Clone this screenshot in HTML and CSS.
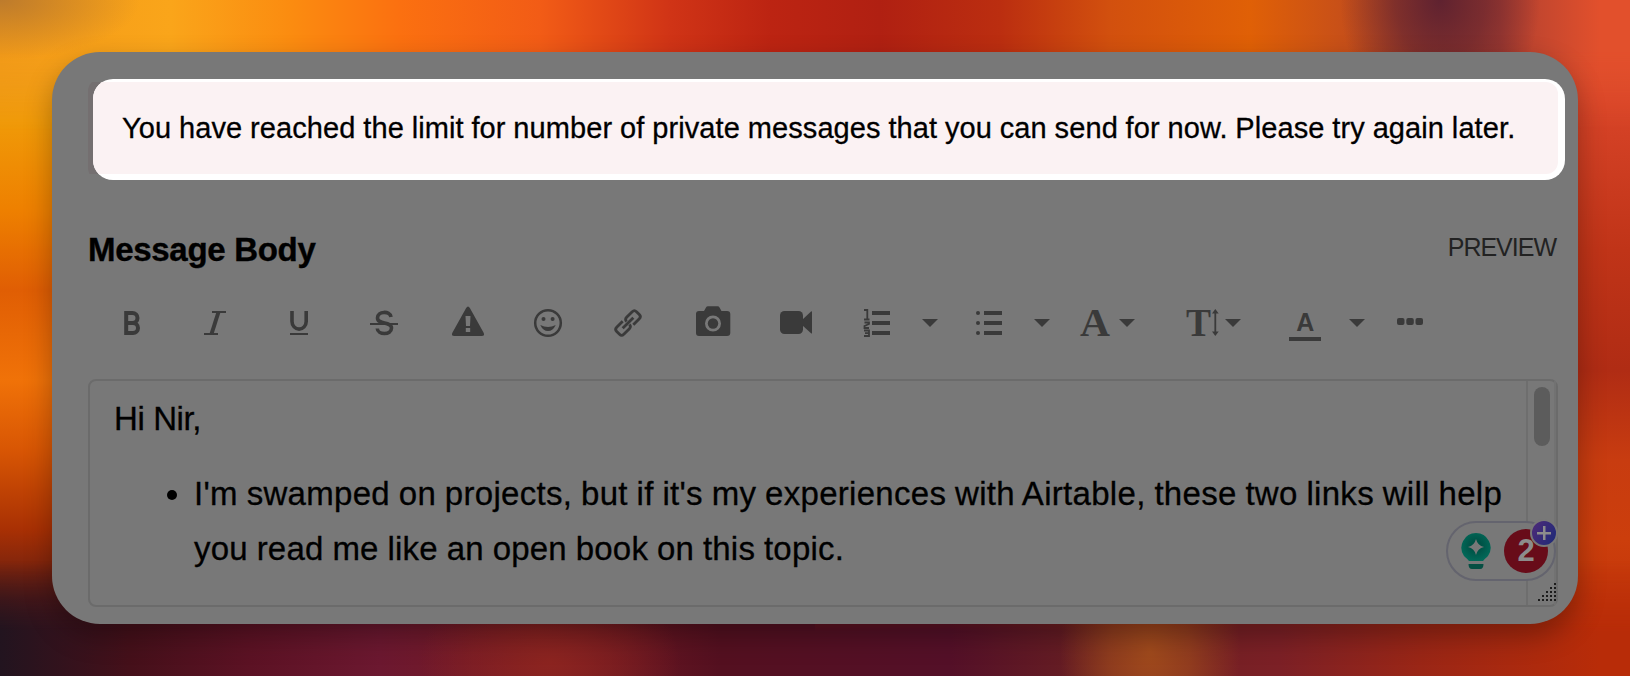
FILE: index.html
```
<!DOCTYPE html>
<html lang="en">
<head>
    <meta charset="UTF-8">
    <meta name="viewport" content="width=device-width, initial-scale=1.0">
    <title>Private Message</title>
    <link rel="stylesheet" href="styles.css">
</head>
<body>

<div class="container">
    <div class="alert-shade">
        <div class="alert">
            <p class="alert-text">You have reached the limit for number of private messages that you can send for now. Please try again later.</p>
        </div>
    </div>

    <div class="editor-header">
        <h2>Message Body</h2>
        <span class="preview">PREVIEW</span>
    </div>

    <!-- Formatting toolbar -->
    <svg class="toolbar" width="1470" height="60" viewBox="88 292 1470 60">
        <!-- bold -->
        <path class="stroke w4" d="M126.3 313H132.500A5 5 0 0 1 132.500 323H126.300M132 323H133A5 5 0 0 1 133 333H126.300M126.200 311V335"/>
        <!-- italic -->
        <path class="stroke w2" d="M212 312H226M204 334H218"/>
        <path class="stroke w4" d="M218.500 312L211.500 334"/>
        <!-- underline -->
        <path class="stroke w35" d="M292 311V321.500A7 7.500 0 0 0 306.200 321.500V311"/>
        <path class="stroke w2" d="M290 334H308"/>
        <!-- strikethrough -->
        <path class="stroke w35" d="M391 317C390 310.500 377.500 311 377.500 318C377.500 325 391.500 321 391.500 328C391.500 335.500 377.500 335 377.300 328.500"/>
        <path class="stroke w2" d="M370 324H398"/>
        <!-- warning -->
        <path class="fill" fill-rule="evenodd" d="M466 308.200Q468 304.600 470 308.200L483.500 332.500Q485.300 336 481.500 336H454.500Q450.700 336 452.500 332.500ZM465.500 316L466 326H470L470.500 316ZM465.800 328V332H470.200V328Z"/>
        <!-- emoji -->
        <circle class="stroke w25" cx="548" cy="323" r="12.800"/>
        <circle class="fill" cx="543.500" cy="319" r="2"/>
        <circle class="fill" cx="552.600" cy="319" r="2"/>
        <path class="fill" d="M540.300 325Q548 329 555.700 325Q553 331 548 331Q543 331 540.300 325Z"/>
        <!-- link -->
        <g class="stroke w3" transform="translate(628 323) rotate(-45)">
            <path d="M-2.500 -5H-11Q-14 -5 -14 -2V2Q-14 5 -11 5H-3Q0 5 0 2"/>
            <path d="M2.500 5H11Q14 5 14 2V-2Q14 -5 11 -5H3Q0 -5 0 -2"/>
            <path d="M-7.500 0H7.500"/>
        </g>
        <!-- camera -->
        <path class="fill" fill-rule="evenodd" d="M699 311H704L706 307.500Q706.500 306.300 708 306.300H717.500Q719 306.300 719.500 307.500L721.500 311H727Q730.300 311 730.300 314V333Q730.300 336 727 336H699Q696 336 696 333V314Q696 311 699 311ZM713 315.500A8 8 0 1 0 713 331.500A8 8 0 1 0 713 315.500Z"/>
        <circle class="fill" cx="713" cy="323.500" r="5.200"/>
        <!-- video -->
        <rect class="fill" x="780" y="311" width="23" height="23" rx="4.500"/>
        <path class="fill" d="M802 320L811 311.500Q812 311 812 312V333Q812 334 811 333.300L802 325Z"/>
        <!-- ordered list -->
        <path class="stroke w4" d="M872 313H890M872 323H890M872 333H890"/>
        <path class="stroke w15" d="M864 310H867.300V319M864 319.500H869.500M864.500 322.500H869V324L864.500 326V328H869M864 330.500H869V336H864M865 333.200H869"/>
        <path class="fill" d="M922 319H938L930 327Z"/>
        <!-- bullet list -->
        <path class="stroke w4" d="M984 313H1002M984 323H1002M984 333H1002"/>
        <circle class="fill" cx="978" cy="313" r="2"/>
        <circle class="fill" cx="978" cy="323" r="2"/>
        <circle class="fill" cx="978" cy="333" r="2"/>
        <path class="fill" d="M1034 319H1050L1042 327Z"/>
        <!-- font family -->
        <text class="serif-icon" x="1080" y="336" font-size="40" textLength="30" lengthAdjust="spacingAndGlyphs">A</text>
        <path class="fill" d="M1119 319H1135L1127 327Z"/>
        <!-- font size -->
        <text class="serif-icon" x="1186" y="336" font-size="41" textLength="25" lengthAdjust="spacingAndGlyphs">T</text>
        <path class="stroke w15" d="M1215.300 311V334"/>
        <path class="fill" d="M1212 313.500L1215.300 309L1218.700 313.500ZM1212 331.500L1215.300 336L1218.700 331.500Z"/>
        <path class="fill" d="M1225 319H1241L1233 327Z"/>
        <!-- text color -->
        <text class="sans-icon" x="1296.300" y="331" font-size="25">A</text>
        <rect class="fill" x="1289" y="337" width="32" height="4"/>
        <path class="fill" d="M1349 319H1365L1357 327Z"/>
        <!-- more -->
        <rect class="fill" x="1397" y="318" width="7.500" height="7" rx="2"/>
        <rect class="fill" x="1406.300" y="318" width="7.500" height="7" rx="2"/>
        <rect class="fill" x="1415.500" y="318" width="7.500" height="7" rx="2"/>
    </svg>

    <div class="editor">
        <div class="editor-content">
            <p class="greeting">Hi Nir,</p>
            <ul>
                <li>
                    <span class="line1">I'm swamped on projects, but if it's my experiences with Airtable, these two links will help</span><br>
                    <span class="line2">you read me like an open book on this topic.</span>
                </li>
            </ul>
        </div>
        <div class="scrollbar">
            <div class="thumb"></div>
        </div>

        <!-- Writing assistant badge -->
        <div class="assistant">
            <svg class="bulb" width="32" height="40" viewBox="0 0 32 40">
                <defs>
                    <radialGradient id="bulbFill" cx="0.5" cy="0.45" r="0.6">
                        <stop offset="0.3" stop-color="#005246"/>
                        <stop offset="1" stop-color="#026c5b"/>
                    </radialGradient>
                </defs>
                <path fill="url(#bulbFill)" fill-rule="evenodd" d="M16 2A14.700 14.700 0 0 0 4 25Q8 28.500 9 30H23Q24 28.500 28 25A14.700 14.700 0 0 0 16 2ZM16 8Q17.500 14.500 24 16Q17.500 17.500 16 24Q14.500 17.500 8 16Q14.500 14.500 16 8Z"/>
                <path fill="#064f43" d="M8.500 33H23.500Q23.500 38 20 38H12Q8.500 38 8.500 33Z"/>
            </svg>
            <span class="count">2</span>
            <span class="plus"></span>
        </div>

        <!-- Resize grip -->
        <svg class="grip" width="18" height="18" viewBox="0 0 18 18">
            <path d="M16 0h2v2h-2zM12 4h2v2h-2zM16 4h2v2h-2zM8 8h2v2h-2zM12 8h2v2h-2zM16 8h2v2h-2zM4 12h2v2h-2zM8 12h2v2h-2zM12 12h2v2h-2zM16 12h2v2h-2zM0 16h2v2h-2zM4 16h2v2h-2zM8 16h2v2h-2zM12 16h2v2h-2zM16 16h2v2h-2z"/>
        </svg>
    </div>
</div>

</body>
</html>
```
FILE: styles.css
```
* {
    margin: 0;
    padding: 0;
    box-sizing: border-box;
    font-family: "Liberation Sans", Arial, sans-serif;
}
html {
    height: 676px;
    overflow: hidden;
}
body {
    position: relative;
    z-index: 0;
    height: 676px;
    padding: 52px;
    overflow: hidden;
    background:
        linear-gradient(to bottom, #e89a28 0, #f09a08 120px, #ee8000 210px, #e05e04 290px, #f07208 380px, #d85604 450px, #a83004 530px, #5c1a14 600px, #241420 676px) 0 0 / 50% 100% no-repeat,
        linear-gradient(to bottom, #e2502c 0, #d84428 100px, #c03418 250px, #b02c14 370px, #c83c10 460px, #cc3e0c 540px, #b82c08 676px) 100% 0 / 50% 100% no-repeat;
}
/* wallpaper bands above and below the panel, faded into the side colours */
body::before,
body::after {
    content: "";
    position: absolute;
    z-index: -1;
    left: 0;
    width: 100%;
    height: 130px;
}
body::before {
    top: 0;
    background:
        radial-gradient(ellipse 140px 60px at 0 0, #bd7b2c, transparent),
        radial-gradient(ellipse 100px 130px at 1440px 0, #5f2230, #5f2230aa 45%, transparent),
        linear-gradient(to right, #f29a18 0, #faa51a 170px, #fb8c10 290px, #fb7010 400px, #f25c16 540px, #d03416 670px, #bc2412 770px, #b02012 880px, #bb2e10 1000px, #d2500e 1110px, #e06006 1250px, #c85018 1340px, #b04030 1500px, #e2502c 1600px);
    -webkit-mask-image: linear-gradient(to bottom, #000 30px, transparent);
    mask-image: linear-gradient(to bottom, #000 52px, transparent);
}
body::after {
    bottom: 0;
    background:
        radial-gradient(ellipse 130px 90px at 550px 115px, #8c2420, transparent),
        radial-gradient(ellipse 90px 130px at 1150px 105px, #a04a1c, #a04a1caa 45%, transparent),
        linear-gradient(to right, #22141f 0, #45101a 130px, #5c1224 250px, #6c1830 380px, #7a1c22 540px, #541020 720px, #541028 950px, #6a2022 1100px, #7c2026 1280px, #9a2616 1420px, #b82c08 1600px);
    -webkit-mask-image: linear-gradient(to top, #000 45px, transparent 115px);
    mask-image: linear-gradient(to top, #000 45px, transparent 115px);
}
.container {
    width: 1526px;
    height: 572px;
    padding: 27px 20px 17px 36px;
    background: #787878;
    border-radius: 48px;
    box-shadow: 0 12px 28px rgba(0, 0, 0, 0.3);
}
.alert-shade {
    display: flex;
    width: 1477px;
    height: 101px;
    padding-left: 5px;
    background: linear-gradient(#746f70, #746f70) 0 3px / 20px 92px no-repeat;
    border-radius: 12px;
}
.alert {
    width: 1472px;
    height: 101px;
    padding: 3px 7px 6px 0;
    background: #fff;
    border-radius: 20px;
    overflow: hidden;
}
.alert-text {
    height: 92px;
    padding-left: 29px;
    background: #fbf2f3;
    border-radius: 0 12px 12px 0;
    color: #000;
    font-size: 29px;
    line-height: 92px;
    letter-spacing: 0.1px;
    word-spacing: -0.4px;
    white-space: nowrap;
    -webkit-text-stroke: 0.3px #000;
}
.editor-header {
    display: flex;
    justify-content: space-between;
    width: 1470px;
    height: 112px;
    padding-top: 50px;
}
h2 {
    color: #000;
    font-size: 33px;
    line-height: 40px;
    letter-spacing: -0.3px;
    -webkit-text-stroke: 0.4px #000;
}
.preview {
    margin-right: 2px;
    color: #222;
    font-size: 25px;
    line-height: 34px;
    letter-spacing: -1px;
}
.toolbar {
    display: block;
}
.fill {
    fill: #3a3a3a;
}
.stroke {
    fill: none;
    stroke: #3a3a3a;
}
.w15 { stroke-width: 1.8; }
.w2 { stroke-width: 2; }
.w25 { stroke-width: 2.5; }
.w3 { stroke-width: 2.8; }
.w35 { stroke-width: 3.6; }
.w4 { stroke-width: 4; }
.serif-icon {
    font-family: "Liberation Serif", serif;
    font-weight: bold;
    fill: #3a3a3a;
}
.sans-icon {
    font-weight: bold;
    fill: #3a3a3a;
}
.editor {
    position: relative;
    display: flex;
    justify-content: space-between;
    width: 1470px;
    height: 228px;
    margin-top: 27px;
    border: 2px solid #6b6b6b;
    border-radius: 8px;
}
.editor-content {
    padding: 10px 0 0 24px;
    color: #000;
    font-size: 33px;
    white-space: nowrap;
    -webkit-text-stroke: 0.3px #000;
}
.greeting {
    line-height: 55px;
    letter-spacing: -0.4px;
}
ul {
    padding-left: 80px;
    margin-top: 20px;
}
li {
    line-height: 55px;
}
.line1 {
    letter-spacing: 0.3px;
    word-spacing: -0.7px;
}
.line2 {
    letter-spacing: 0.2px;
    word-spacing: -0.5px;
}
.scrollbar {
    width: 30px;
    padding: 6px 0 0 6px;
    border-left: 2px solid #6e6e6e;
    border-right: 2px solid #727272;
}
.thumb {
    width: 16px;
    height: 59px;
    border-radius: 8px;
    background: #5c5c5c;
}
.assistant {
    position: absolute;
    right: 0;
    bottom: 24px;
    display: flex;
    align-items: center;
    gap: 12px;
    width: 110px;
    height: 60px;
    padding-left: 12px;
    border: 2px solid #64646e;
    border-radius: 30px;
    background: #787878;
}
.count {
    width: 44px;
    height: 44px;
    border-radius: 50%;
    background: #680c19;
    color: #8c8c8c;
    font-size: 31px;
    font-weight: bold;
    line-height: 44px;
    text-align: center;
}
.plus {
    position: absolute;
    top: -4px;
    right: -4px;
    width: 28px;
    height: 28px;
    border: 2px solid #787878;
    border-radius: 50%;
    background:
        linear-gradient(#8c8c8c, #8c8c8c) center / 14px 2.5px no-repeat,
        linear-gradient(#8c8c8c, #8c8c8c) center / 2.5px 14px no-repeat,
        linear-gradient(120deg, #4f2a78, #1c2a78);
}
.grip {
    position: absolute;
    right: 0;
    bottom: 4px;
    fill: #1c1c1c;
}
```
